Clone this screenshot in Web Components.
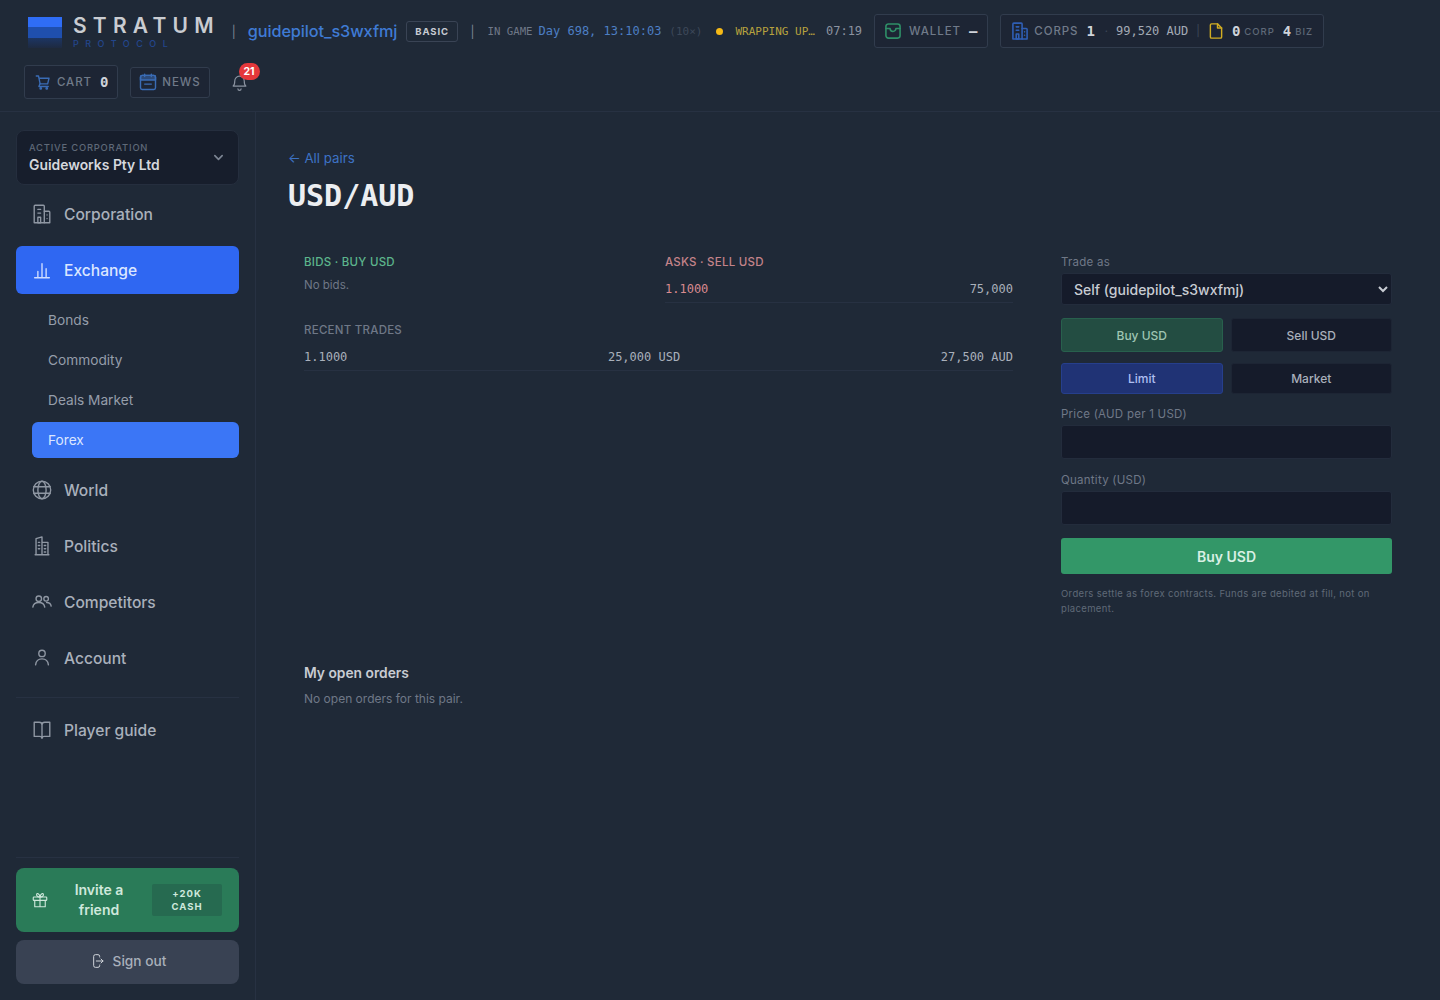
<!DOCTYPE html>
<html lang="en">
<head>
<meta charset="utf-8">
<title>USD/AUD - Stratum Protocol</title>
<style>
  html, body { margin: 0; height: 100%; background: #1f2937; }
  body { font-family: "Inter", "Liberation Sans", sans-serif; color: #d1d5db; }
</style>
</head>
<body>
<app-shell>
  <top-bar slot="top"></top-bar>
  <side-bar slot="side"></side-bar>
  <pair-page></pair-page>
</app-shell>

<script>
const ICONS = {
    cart: '<path d="M3 4h3l2.200 10.500h10L20 7H7"/><path d="M8 14.500 6.500 18H19"/><circle cx="9" cy="20.500" r="1"/><circle cx="17" cy="20.500" r="1"/>',
    news: '<rect x="3" y="4" width="18" height="17" rx="2"/><path d="M3 6a2 2 0 0 1 2-2h14a2 2 0 0 1 2 2v3.500H3z" fill="currentColor" fill-opacity=".55"/><path d="M8 2.500v3M16 2.500v3M8 14.500h8"/>',
    bell: '<path d="M6 10a6 6 0 0 1 12 0c0 5 2 6.500 2 6.500H4S6 15 6 10"/><path d="M10 20a2 2 0 0 0 4 0"/>',
    wallet: '<rect x="3.500" y="3.500" width="17" height="17" rx="3"/><path d="M3.500 9h5a3.500 3.500 0 0 0 7 0h5"/>',
    building: '<path d="M3.500 21.500V3.500a1 1 0 0 1 1-1h9a1 1 0 0 1 1 1v18z"/><path d="M14.500 9h5a1 1 0 0 1 1 1v11.500h-6M7.500 7h3M7.500 11h3M7.500 15.500h3v6h-3zM17.500 13v.01M17.500 17v.01"/>',
    file: '<path d="M14 2.500H6a1.500 1.500 0 0 0-1.500 1.500v16A1.500 1.500 0 0 0 6 21.500h12a1.500 1.500 0 0 0 1.500-1.500V8z"/><path d="M14 2.500V8h5.500"/>',
    chart: '<path d="M4 20.500h16M7.500 20.500v-7M12 20.500V5M16.500 20.500v-10"/>',
    globe: '<circle cx="12" cy="12" r="9.500"/><ellipse cx="12" cy="12" rx="4.500" ry="9.500"/><path d="M3 8.500h18M3 15.500h18"/>',
    politics: '<path d="M5.500 21.500V4l6.500-2v19.500M12 8h6.500v13.500M4.500 21.500h15M8 8h1.500M8 11.500h1.500M8 15h1.500M14.500 11.500h1.500M14.500 15h1.500M14.500 18.500h1.500"/>',
    users: '<circle cx="8.500" cy="8.500" r="3"/><path d="M2 17.500c.5-3.500 3-5 6.500-5s6 1.500 6.500 5"/><circle cx="16.500" cy="8.500" r="2.500"/><path d="M17 12.500c2.800 0 4.600 1.300 5 4"/>',
    user: '<circle cx="12" cy="7" r="3.500"/><path d="M5 19.500c.5-4.500 3-6.500 7-6.500s6.500 2 7 6.500"/>',
    book: '<path d="M3.500 3.500H9a3 3 0 0 1 3 3V21a2.500 2.500 0 0 0-2.500-2h-6zM20.500 3.500H15a3 3 0 0 0-3 3V21a2.500 2.500 0 0 1 2.500-2h6z"/>',
    gift: '<rect x="3" y="8" width="18" height="4.500" rx="1"/><path d="M5 12.500V21h14v-8.500M12 8v13M12 8C9 8 7 6.500 7.500 4.500S11 3 12 8c1-5 4-5.500 4.500-3.500S15 8 12 8"/>',
    signout: '<path d="M16 6V5a2.500 2.500 0 0 0-2.500-2.500h-4A2.500 2.500 0 0 0 7 5v14a2.500 2.500 0 0 0 2.500 2.500h4A2.500 2.500 0 0 0 16 19v-1"/><path d="M11 12h10M18 9l3 3-3 3"/>'
};

function icon(name, size, color, weight, margin) {
    return `<svg width="${size}" height="${size}" viewBox="0 0 24 24" fill="none" stroke="currentColor" stroke-width="${weight || 1.5}" stroke-linecap="round" stroke-linejoin="round" style="flex:none;display:block;color:${color};margin:${margin || 0}">${ICONS[name]}</svg>`;
}

class AppShell extends HTMLElement {
    constructor() {
        super();
        this.attachShadow({ mode: 'open' });
        this.shadowRoot.innerHTML = /* html */ `
            <style>
                :host { display: flex; flex-direction: column; height: 1000px; overflow: hidden; }
                .body { display: flex; flex: 1; min-height: 0; }
                main { flex: 1; min-width: 0; }
            </style>
            <slot name="top"></slot>
            <div class="body">
                <slot name="side"></slot>
                <main><slot></slot></main>
            </div>
        `;
    }
}

class HudBox extends HTMLElement {
    constructor() {
        super();
        this.attachShadow({ mode: 'open' });
        this.shadowRoot.innerHTML = /* html */ `
            <style>
                :host {
                    display: inline-flex; align-items: center; gap: 8px; box-sizing: border-box;
                    height: 34px; padding: 0 11px; border: 1px solid #313c4d; border-radius: 3px;
                    background: #1d2534;
                }
            </style>
            <slot></slot>
        `;
    }
}

class TopBar extends HTMLElement {
    constructor() {
        super();
        this.attachShadow({ mode: 'open' });
        this.shadowRoot.innerHTML = /* html */ `
            <style>
                :host {
                    display: flex; flex-wrap: wrap; align-items: center; gap: 17px 12px; box-sizing: border-box;
                    height: 112px; padding: 14px 24px 12px; border-bottom: 1px solid #273142; align-content: flex-start;
                }
                .logo { display: flex; align-items: flex-start; gap: 11px; margin-left: 4px; height: 34px; }
                .bands { width: 34px; height: 31px; margin-top: 3px; display: flex; flex-direction: column; }
                .bands i { display: block; flex: 1; }
                .bands i:nth-child(1) { background: #2f6df6; }
                .bands i:nth-child(2) { background: #1f4fae; }
                .bands i:nth-child(3) { background: linear-gradient(#1c3563, #1e2a40); }
                .word { display: flex; flex-direction: column; }
                .word b { font: 600 21px/22px "Inter", sans-serif; letter-spacing: 6.200px; color: #c9ccd1; margin-top: 1px; }
                .word span { font: 500 9px/11px "Inter", sans-serif; letter-spacing: 6.500px; color: #23468c; margin-top: 1px; }
                .sep { color: #7d8694; font-size: 12px; }
                .name { color: #3f7bd4; font-size: 16.300px; font-weight: 500; letter-spacing: -.1px; }
                .tier {
                    font: 700 9.500px/19px "Inter", sans-serif; letter-spacing: .9px; color: #c8ccd3; padding: 0 8.500px;
                    border: 1px solid #3a4455; border-radius: 3px; margin-left: -3.500px;
                }
                .clock { display: flex; align-items: center; gap: 6px; font-family: "DejaVu Sans Mono", "Liberation Mono", monospace; white-space: nowrap; margin-left: 1px; }
                .tiny { font-size: 10.700px; color: #6f7887; }
                .day { font-size: 12px; color: #4d7fc4; }
                .rate { font-size: 11px; color: #3d4859; margin-left: 2px; }
                .dot { width: 7px; height: 7px; border-radius: 50%; background: #f5b916; margin: 0 6px 0 8px; }
                .wrap { font-size: 11px; color: #b7a23e; }
                .timer { font-size: 12px; color: #8b93a0; margin-left: 5px; }
                .lbl { font: 500 11.500px "Inter", sans-serif; letter-spacing: .9px; color: #707a89; }
                .val { font: 700 14px "DejaVu Sans Mono", monospace; color: #cfd3d9; }
                .money { font: 500 12px "DejaVu Sans Mono", monospace; color: #a3aab5; white-space: nowrap; }
                .mid { color: #3d4859; font-size: 11px; }
                .dotsep { margin-left: 2px; }
                .unit { font: 500 9.500px "Inter", sans-serif; letter-spacing: 1px; color: #5f6978; margin-left: -4px; }
                .bell { position: relative; width: 28px; height: 28px; display: flex; align-items: center; justify-content: center; margin-left: 4px; }
                .badge {
                    position: absolute; top: -5px; left: 13px; min-width: 21px; height: 17px; border-radius: 9px;
                    background: #e5383b; color: #fff; font: 700 10.500px/17px "Inter", sans-serif; text-align: center;
                }
            </style>
            <div class="logo">
                <div class="bands"><i></i><i></i><i></i></div>
                <div class="word"><b>STRATUM</b><span>PROTOCOL</span></div>
            </div>
            <span class="sep">|</span>
            <span class="name">guidepilot_s3wxfmj</span>
            <span class="tier">BASIC</span>
            <span class="sep">|</span>
            <div class="clock">
                <span class="tiny">IN GAME</span>
                <span class="day">Day 698, 13:10:03</span>
                <span class="rate">(10×)</span>
                <span class="dot"></span>
                <span class="wrap">WRAPPING UP…</span>
                <span class="timer">07:19</span>
            </div>
            <hud-box style="padding-right:10px">
                ${icon('wallet', 20, '#2f8f67', 1.9, '0 -2px 0 -3px')}
                <span class="lbl">WALLET</span>
                <span class="val">—</span>
            </hud-box>
            <hud-box style="padding-right:10px">
                ${icon('building', 20, '#2f5fb5', 1.9, '0 -4px 0 -2px')}
                <span class="lbl">CORPS</span>
                <span class="val">1</span>
                <span class="mid dotsep">·</span>
                <span class="money">99,520 AUD</span>
                <span class="mid">|</span>
                ${icon('file', 18, '#d1ad22', 1.9, '0 -1px 0 -1px')}
                <span class="val">0</span>
                <span class="unit">CORP</span>
                <span class="val">4</span>
                <span class="unit">BIZ</span>
            </hud-box>
            <hud-box style="padding-right:9px">
                ${icon('cart', 18, '#3a6cb5', 1.8, '0 -3px 0 -2px')}
                <span class="lbl">CART</span>
                <span class="val">0</span>
            </hud-box>
            <hud-box style="height:31px;padding:0 8px 0 10px">
                ${icon('news', 20, '#3a6cb5', 1.7, '0 -4px 0 -3px')}
                <span class="lbl">NEWS</span>
            </hud-box>
            <div class="bell">
                ${icon('bell', 19, '#8b93a0')}
                <span class="badge">21</span>
            </div>
        `;
    }
}

class NavItem extends HTMLElement {
    connectedCallback() {
        if (this.shadowRoot) return;
        this.attachShadow({ mode: 'open' });
        const active = this.hasAttribute('active');
        this.shadowRoot.innerHTML = /* html */ `
            <style>
                :host {
                    display: flex; align-items: center; gap: 11px; box-sizing: border-box; height: 48px;
                    padding: 0 15px; border-radius: 6px; font-size: 15.600px; font-weight: 500; color: #a9b0bb;
                }
                :host([active]) { background: #2f67f2; color: #dbe6ff; }
            </style>
            ${icon(this.getAttribute('icon'), 22, active ? '#cfdcff' : '#8f97a3')}
            <slot></slot>
        `;
    }
}

class SubItem extends HTMLElement {
    constructor() {
        super();
        this.attachShadow({ mode: 'open' });
        this.shadowRoot.innerHTML = /* html */ `
            <style>
                :host {
                    display: flex; align-items: center; box-sizing: border-box; height: 36px; margin-left: 16px;
                    padding: 0 16px 1px; border-radius: 6px; font-size: 13.700px; color: #959daa;
                }
                :host([active]) { background: #3b76f6; color: #dbe6ff; }
            </style>
            <slot></slot>
        `;
    }
}

class SideBar extends HTMLElement {
    constructor() {
        super();
        this.attachShadow({ mode: 'open' });
        this.shadowRoot.innerHTML = /* html */ `
            <style>
                :host {
                    display: flex; flex-direction: column; box-sizing: border-box; width: 256px; flex: none;
                    height: 888px; padding: 18px 16px 16px; border-right: 1px solid #273142;
                }
                .corp {
                    display: flex; align-items: center; justify-content: space-between; box-sizing: border-box;
                    height: 55px; padding: 0 14px 0 12px; margin-bottom: 5px; background: #171e2c; border: 1px solid #252e3e; border-radius: 8px;
                }
                .corp small { display: block; font-size: 9.400px; letter-spacing: .8px; color: #5f6978; font-weight: 500; margin-bottom: 4px; }
                .corp b { display: block; font-size: 13.900px; font-weight: 600; color: #d5d8dd; }
                .group { display: flex; flex-direction: column; gap: 4px; }
                nav { display: flex; flex-direction: column; gap: 8px; }
                hr { border: 0; border-top: 1px solid #273142; margin: 15px 0 8px; width: 100%; }
                .spacer { flex: 1; }
                .invite {
                    display: flex; align-items: center; box-sizing: border-box; height: 64px; padding: 0 17px 0 15px;
                    background: #2a7b58; border-radius: 8px; color: #cfe8dc; gap: 8px;
                }
                .invite span { flex: 1; text-align: center; font-size: 14px; font-weight: 600; line-height: 20px; margin-right: 3px; }
                .invite em {
                    flex: none; width: 70px; height: 32px; display: flex; align-items: center; justify-content: center; text-align: center;
                    background: #266a50; font: 700 9.500px/13px "Inter", sans-serif; letter-spacing: 1px; color: #cfe8dc; border-radius: 2px;
                }
                .out {
                    display: flex; align-items: center; justify-content: center; gap: 8px; box-sizing: border-box; height: 44px; margin-top: 8px;
                    padding-bottom: 2px; background: #394253; border-radius: 8px; font-size: 13.700px; font-weight: 500; color: #a9b0bb;
                }
            </style>
            <div class="corp">
                <div><small>ACTIVE CORPORATION</small><b>Guideworks Pty Ltd</b></div>
                <svg width="11" height="11" viewBox="0 0 24 24" fill="none" stroke="#7d8694" stroke-width="3.500" stroke-linecap="round" stroke-linejoin="round"><path d="M4 8l8 8 8-8"/></svg>
            </div>
            <nav>
                <nav-item icon="building">Corporation</nav-item>
                <nav-item icon="chart" active>Exchange</nav-item>
                <div class="group">
                    <sub-item>Bonds</sub-item>
                    <sub-item>Commodity</sub-item>
                    <sub-item>Deals Market</sub-item>
                    <sub-item active>Forex</sub-item>
                </div>
                <nav-item icon="globe">World</nav-item>
                <nav-item icon="politics">Politics</nav-item>
                <nav-item icon="users">Competitors</nav-item>
                <nav-item icon="user">Account</nav-item>
            </nav>
            <hr>
            <nav-item icon="book">Player guide</nav-item>
            <div class="spacer"></div>
            <hr style="margin:0 0 10px">
            <div class="invite">
                ${icon('gift', 18, '#cfe8dc')}
                <span>Invite a friend</span>
                <em>+20K<br>CASH</em>
            </div>
            <div class="out">
                ${icon('signout', 16, '#cfd3d9')}
                Sign out
            </div>
        `;
    }
}

class BookRow extends HTMLElement {
    constructor() {
        super();
        this.attachShadow({ mode: 'open' });
        this.shadowRoot.innerHTML = /* html */ `
            <style>
                :host {
                    display: flex; justify-content: space-between; box-sizing: border-box; padding: 0 0 3px;
                    border-bottom: 1px solid #273142; font: 12px/20px "DejaVu Sans Mono", "Liberation Mono", monospace; color: #a9b0bb;
                }
            </style>
            <slot></slot>
        `;
    }
}

class OrderBook extends HTMLElement {
    constructor() {
        super();
        this.attachShadow({ mode: 'open' });
        this.shadowRoot.innerHTML = /* html */ `
            <style>
                :host { display: block; box-sizing: border-box; padding: 14px 16px 0; }
                .sides { display: grid; grid-template-columns: 345px 1fr; gap: 16px; }
                h4 { margin: 0; font-size: 11.500px; line-height: 14px; font-weight: 500; letter-spacing: .25px; }
                .bid { color: #5cb58c; }
                .ask { color: #c4838a; }
                .price { color: #d98a8f; }
                .gray { color: #6f7887; }
                p { margin: 9px 0 0; font-size: 11.500px; line-height: 14px; color: #6f7887; }
                .ask-row { margin-top: 10px; }
                .trades { margin-top: 20px; }
                .trades h4 { margin-bottom: 10px; }
            </style>
            <div class="sides">
                <div>
                    <h4 class="bid">BIDS · BUY USD</h4>
                    <p>No bids.</p>
                </div>
                <div>
                    <h4 class="ask">ASKS · SELL USD</h4>
                    <book-row class="ask-row"><span class="price">1.1000</span><span>75,000</span></book-row>
                </div>
            </div>
            <div class="trades">
                <h4 class="gray">RECENT TRADES</h4>
                <book-row><span>1.1000</span><span>25,000 USD</span><span>27,500 AUD</span></book-row>
            </div>
        `;
    }
}

class TradeForm extends HTMLElement {
    constructor() {
        super();
        this.attachShadow({ mode: 'open' });
        this.shadowRoot.innerHTML = /* html */ `
            <style>
                :host { display: block; box-sizing: border-box; padding: 14px 16px 0; }
                label { display: block; font-size: 11.500px; line-height: 14px; letter-spacing: .25px; color: #6f7887; margin-bottom: 4px; }
                select, input {
                    display: block; width: 100%; box-sizing: border-box; background: #151b2a; border: 1px solid #232c3c;
                    border-radius: 3px; color: #c8ccd3; font: 500 14px "Inter", sans-serif; outline: 0;
                }
                select { height: 32px; padding: 0 8px; }
                input { height: 34px; margin-bottom: 14px; }
                input.last { margin-bottom: 13px; }
                .pair { display: grid; grid-template-columns: 1fr 1fr; gap: 8px; }
                .pair div {
                    display: flex; align-items: center; justify-content: center; box-sizing: border-box;
                    border-radius: 3px; background: #151b2a; border: 1px solid #1d2534; font-size: 12px; font-weight: 500; color: #a9b0bb;
                }
                .side { margin-top: 13px; height: 34px; }
                .kind { margin-top: 11px; height: 31px; margin-bottom: 13px; }
                .pair .buy { background: #234d42; border-color: #28604d; color: #9fc5b2; }
                .pair .limit { background: #203375; border-color: #263f8c; color: #aebff0; }
                .go {
                    display: flex; align-items: center; justify-content: center; height: 36px; border-radius: 3px;
                    background: #339768; color: #d9f0e4; font-size: 14px; font-weight: 600;
                }
                small { display: block; margin-top: 12px; font-size: 9.500px; line-height: 15px; letter-spacing: .35px; color: #5f6978; }
            </style>
            <label>Trade as</label>
            <select><option>Self (guidepilot_s3wxfmj)</option></select>
            <div class="pair side"><div class="buy">Buy USD</div><div>Sell USD</div></div>
            <div class="pair kind"><div class="limit">Limit</div><div>Market</div></div>
            <label>Price (AUD per 1 USD)</label>
            <input type="text">
            <label>Quantity (USD)</label>
            <input class="last" type="text">
            <div class="go">Buy USD</div>
            <small>Orders settle as forex contracts. Funds are debited at fill, not on placement.</small>
        `;
    }
}

class PairPage extends HTMLElement {
    constructor() {
        super();
        this.attachShadow({ mode: 'open' });
        this.shadowRoot.innerHTML = /* html */ `
            <style>
                :host { display: block; box-sizing: border-box; padding: 38px 32px 0; }
                a { display: block; font-size: 13.300px; line-height: 16px; color: #3d72c4; }
                h1 { margin: 12px 0 0; font: 700 30px/36px "DejaVu Sans Mono", "Liberation Mono", monospace; color: #eceef1; }
                .grid { display: grid; grid-template-columns: 741px 363px; gap: 16px; margin-top: 27px; height: 424px; }
                .orders { padding: 0 16px; }
                h3 { margin: 0; font-size: 13.800px; line-height: 16px; font-weight: 600; color: #c8ccd3; }
                p { margin: 11px 0 0; font-size: 12px; line-height: 14px; color: #6f7887; }
            </style>
            <a>← All pairs</a>
            <h1>USD/AUD</h1>
            <div class="grid">
                <order-book></order-book>
                <trade-form></trade-form>
            </div>
            <div class="orders">
                <h3>My open orders</h3>
                <p>No open orders for this pair.</p>
            </div>
        `;
    }
}

customElements.define('app-shell', AppShell);
customElements.define('hud-box', HudBox);
customElements.define('top-bar', TopBar);
customElements.define('nav-item', NavItem);
customElements.define('sub-item', SubItem);
customElements.define('side-bar', SideBar);
customElements.define('book-row', BookRow);
customElements.define('order-book', OrderBook);
customElements.define('trade-form', TradeForm);
customElements.define('pair-page', PairPage);
</script>
</body>
</html>
